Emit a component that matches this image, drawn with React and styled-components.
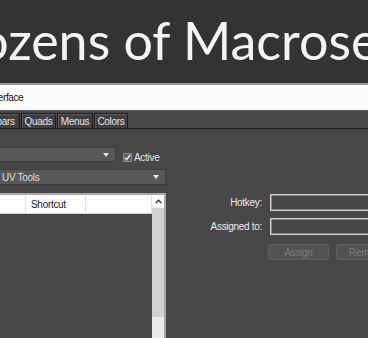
import React from "react";
import styled, { createGlobalStyle } from "styled-components";

const GlobalStyle = createGlobalStyle`
  html, body {
    margin: 0;
    padding: 0;
    background: #474747;
  }
  body {
    overflow: hidden;
  }
`;

const Page = styled.div`
  width: 368px;
  height: 338px;
  overflow: hidden;
  display: flex;
  flex-direction: column;
  background: #474747;
  font-family: "Liberation Sans", Arial, sans-serif;
  font-size: 10px;
`;

const Banner = styled.header`
  height: 85px;
  box-sizing: border-box;
  padding-top: 14px;
  background: #333333;
  border-bottom: 2px solid #9a9a9a;
  overflow: hidden;
`;

const Headline = styled.h1`
  margin: 0 0 0 -60px;
  font-family: Lato, "Open Sans", sans-serif;
  font-weight: 400;
  font-size: 52px;
  line-height: 52px;
  color: #f4f4f4;
  white-space: nowrap;
`;

const Dialog = styled.section`
  flex: 1;
  min-height: 0;
  display: flex;
  flex-direction: column;
`;

const TitleBar = styled.div`
  height: 25px;
  flex-shrink: 0;
  display: flex;
  align-items: center;
  overflow: hidden;
  white-space: nowrap;
  background: #fcfcfc;
  color: #111;
  letter-spacing: -0.4px;

  span {
    margin-left: -80px;
  }
`;

const TabStrip = styled.nav`
  height: 19px;
  flex-shrink: 0;
  box-sizing: border-box;
  display: flex;
  align-items: flex-end;
  gap: 1px;
  margin-left: -26px;
  border-top: 1px solid #5a5a5a;
  border-bottom: 1px solid #1c1c1c;
`;

const Tab = styled.div`
  width: ${(p) => p.$w}px;
  height: 15px;
  box-sizing: border-box;
  display: flex;
  align-items: center;
  justify-content: center;
  background: #3f3f3f;
  border: 1px solid #1e1e1e;
  border-bottom: none;
  box-shadow: inset 1px 1px 0 #5a5a5a;
  color: #e6e6e6;
  letter-spacing: -0.3px;
`;

const Body = styled.div`
  flex: 1;
  min-height: 0;
  display: flex;
`;

const LeftCol = styled.div`
  width: 166px;
  flex-shrink: 0;
  box-sizing: border-box;
  padding-top: 18px;
  display: flex;
  flex-direction: column;
`;

const SelectRow = styled.div`
  display: flex;
  align-items: flex-end;
  gap: 7px;
`;

const Select = styled.div`
  width: ${(p) => p.$w}px;
  height: ${(p) => p.$h}px;
  margin-left: -20px;
  margin-top: ${(p) => p.$top || 0}px;
  box-sizing: border-box;
  display: flex;
  align-items: center;
  justify-content: space-between;
  padding: 0 6px 0 21px;
  background: #585858;
  border: 1px solid #3c3c3c;
  color: #dedede;
  letter-spacing: -0.3px;
`;

const Caret = styled.span`
  width: 0;
  height: 0;
  border-left: 3px solid transparent;
  border-right: 3px solid transparent;
  border-top: 4px solid #e6e6e6;
`;

const CheckLabel = styled.label`
  display: flex;
  align-items: center;
  gap: 2px;
  color: #e4e4e4;
  letter-spacing: -0.3px;
  line-height: 9px;
`;

const CheckBox = styled.span`
  width: 9px;
  height: 9px;
  box-sizing: border-box;
  display: flex;
  align-items: center;
  justify-content: center;
  background: #5d5d5d;
  border: 1px solid #8c8c8c;
`;

const ListBox = styled.div`
  flex: 1;
  margin-top: 8px;
  margin-left: -100px;
  width: 266px;
  box-sizing: border-box;
  display: grid;
  grid-template-columns: 1fr 12px;
  border: 2px solid #a9a9a9;
  border-bottom: none;
`;

const ListMain = styled.div`
  display: flex;
  flex-direction: column;
`;

const ListHeader = styled.div`
  height: 18px;
  display: grid;
  grid-template-columns: 124px 60px 1fr;
  background: #fdfdfd;
  border-bottom: 1px solid #d6d6d6;
  color: #222;
  letter-spacing: -0.3px;
`;

const HeaderCell = styled.div`
  display: flex;
  align-items: center;
  padding-left: 5px;
  border-right: 1px solid #e2e2e2;
`;

const ListRows = styled.div`
  flex: 1;
  background: #474747;
`;

const ScrollBar = styled.div`
  display: flex;
  flex-direction: column;
  background: #ebebeb;
`;

const ScrollButton = styled.div`
  height: 13px;
  display: flex;
  align-items: center;
  justify-content: center;
  background: #fdfdfd;
`;

const ScrollThumb = styled.div`
  height: 109px;
  background: #d2d2d2;
`;

const RightCol = styled.div`
  flex: 1;
  padding-top: 65px;
  display: grid;
  grid-template-columns: 96px 140px;
  grid-auto-rows: min-content;
  column-gap: 8px;
  row-gap: 7px;
  align-items: center;
`;

const FieldLabel = styled.label`
  text-align: right;
  color: #ececec;
  letter-spacing: -0.3px;
`;

const Field = styled.div`
  height: 17px;
  box-sizing: border-box;
  background: #464646;
  border: 1px solid #d0d0d0;
  box-shadow: inset 0 0 0 1px #8a8a8a;
`;

const ButtonRow = styled.div`
  grid-column: 2;
  display: flex;
  gap: 7px;
  margin: 2px 0 0 -2px;
`;

const Button = styled.button`
  width: 61px;
  height: 16px;
  padding: 0;
  background: #525252;
  border: 1px solid #5f5f5f;
  border-radius: 2px;
  color: #7c7c7c;
  font-family: "Liberation Sans", Arial, sans-serif;
  font-size: 10px;
  letter-spacing: -0.3px;
`;

export default function App() {
  return (
    <Page>
      <GlobalStyle />
      <Banner>
        <Headline>Dozens of Macrosets</Headline>
      </Banner>
      <Dialog>
        <TitleBar>
          <span>Customize User Interface</span>
        </TitleBar>
        <TabStrip>
          <Tab $w={46}>Toolbars</Tab>
          <Tab $w={35}>Quads</Tab>
          <Tab $w={36}>Menus</Tab>
          <Tab $w={34}>Colors</Tab>
        </TabStrip>
        <Body>
          <LeftCol>
            <SelectRow>
              <Select $w={136} $h={15}>
                <span />
                <Caret />
              </Select>
              <CheckLabel>
                <CheckBox>
                  <svg width="7" height="7" viewBox="0 0 7 7">
                    <polyline points="0.8,3.6 2.6,5.6 6.2,1" fill="none" stroke="#f2f2f2" strokeWidth="1.4" />
                  </svg>
                </CheckBox>
                Active
              </CheckLabel>
            </SelectRow>
            <Select $w={186} $h={16} $top={7}>
              <span>UV Tools</span>
              <Caret />
            </Select>
            <ListBox>
              <ListMain>
                <ListHeader>
                  <HeaderCell>Action</HeaderCell>
                  <HeaderCell>Shortcut</HeaderCell>
                  <HeaderCell />
                </ListHeader>
                <ListRows />
              </ListMain>
              <ScrollBar>
                <ScrollButton>
                  <svg width="7" height="5" viewBox="0 0 7 5">
                    <polyline points="0.8,4 3.5,1.2 6.2,4" fill="none" stroke="#333" strokeWidth="1.3" />
                  </svg>
                </ScrollButton>
                <ScrollThumb />
              </ScrollBar>
            </ListBox>
          </LeftCol>
          <RightCol>
            <FieldLabel>Hotkey:</FieldLabel>
            <Field />
            <FieldLabel>Assigned to:</FieldLabel>
            <Field />
            <ButtonRow>
              <Button disabled>Assign</Button>
              <Button disabled>Remove</Button>
            </ButtonRow>
          </RightCol>
        </Body>
      </Dialog>
    </Page>
  );
}
